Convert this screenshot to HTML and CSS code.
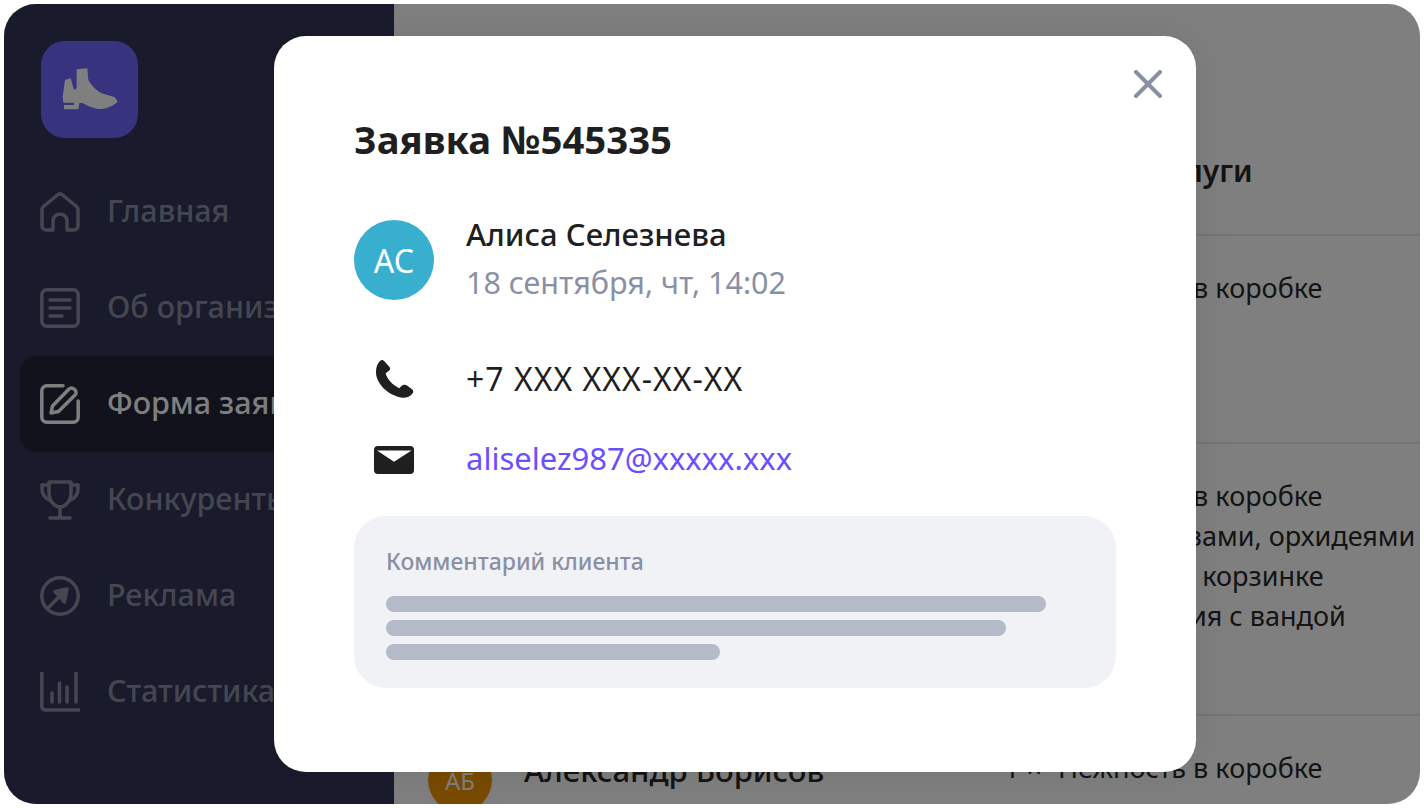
FILE: index.html
```html
<!DOCTYPE html>
<html lang="en">
<head>
    <meta charset="UTF-8">
    <title>Заявка</title>
    <link rel="stylesheet" href="styles.css">
</head>
<body>
    <div class="app">
        <aside class="sidebar">
            <div class="logo">
                <svg width="80" height="60" viewBox="0 0 240 180"><path d="M80 28 112 25 115 60C125 78 140 92 155 100L195 112 203 125C195 133 185 138 172 143 160 148 150 148 140 146L120 140 95 128 88 130 85 148H42V135H72V128H40L38 110 45 60 62 55 72 90 80 85z" fill="#fff"/></svg>
            </div>
            <nav class="nav">
                <a class="nav-item">
                    <svg class="nav-icon" viewBox="0 0 40 40"><path d="M13 38H6a4 4 0 0 1-4-4V17.500a4 4 0 0 1 1.400-3L17.400 3a4 4 0 0 1 5.200 0l14 11.500a4 4 0 0 1 1.400 3V34a4 4 0 0 1-4 4h-7V29a7 7 0 0 0-14 0z"/></svg>
                    <span>Главная</span>
                </a>
                <a class="nav-item">
                    <svg class="nav-icon" viewBox="0 0 40 40"><rect x="1.800" y="1.800" width="36.400" height="36.400" rx="5"/><path d="M10 12h20M10 20h20M10 28h12"/></svg>
                    <span>Об организации</span>
                </a>
                <a class="nav-item active">
                    <svg class="nav-icon" viewBox="0 0 40 40"><path d="M23 1.800H6.800a5 5 0 0 0-5 5v26.400a5 5 0 0 0 5 5h26.400a5 5 0 0 0 5-5V17"/><path d="M11 29l1.500-7L29 5a3.500 3.500 0 0 1 5 0l1 1a3.500 3.500 0 0 1 0 5L18.500 27.500z"/></svg>
                    <span>Форма заявки</span>
                </a>
                <a class="nav-item">
                    <svg class="nav-icon" viewBox="0 0 40 40"><path d="M9 2h22v11c0 7-5 14-11 14S9 20 9 13z"/><path d="M9 5H2v4c0 6 4 10 9 12M31 5h7v4c0 6-4 10-9 12M20 27v10M10 38h20"/></svg>
                    <span>Конкуренты</span>
                </a>
                <a class="nav-item">
                    <svg class="nav-icon" viewBox="0 0 40 40"><circle cx="20" cy="20" r="18.200"/><path d="M8 32 22 18"/><path class="solid" d="M15 15.500 27 13 24.500 26z"/></svg>
                    <span>Реклама</span>
                </a>
                <a class="nav-item">
                    <svg class="nav-icon" viewBox="0 0 40 40"><path d="M1.800 0v34.500a3.500 3.500 0 0 0 3.500 3.500H40M12 21v9M19.500 11v19M27 15v15M36 1v29"/></svg>
                    <span>Статистика</span>
                </a>
            </nav>
        </aside>
        <main class="content">
            <div class="table-head">
                <span class="col-client"></span>
                <span class="col-service">Наши услуги</span>
            </div>
            <div class="row row-short">
                <div class="col-client"></div>
                <div class="col-service"><p><span class="qty">1 ×</span>Нежность в коробке</p></div>
            </div>
            <div class="row row-long">
                <div class="col-client"></div>
                <div class="col-service">
                    <p><span class="qty">1 ×</span>Нежность в коробке</p>
                    <p><span class="qty">1 ×</span>Букет с розами, орхидеями</p>
                    <p><span class="qty">1 ×</span>Орхидеи в корзинке</p>
                    <p><span class="qty">1 ×</span>Композиция с вандой</p>
                </div>
            </div>
            <div class="row">
                <div class="col-client client">
                    <span class="client-avatar">АБ</span>
                    <span class="client-name">Александр Борисов</span>
                </div>
                <div class="col-service"><p><span class="qty">1 ×</span>Нежность в коробке</p></div>
            </div>
        </main>
        <div class="overlay">
            <section class="modal">
                <svg class="close" width="28" height="28" viewBox="0 0 28 28"><path d="M2 2l24 24M26 2 2 26"/></svg>
                <h1 class="modal-title">Заявка №545335</h1>
                <div class="person">
                    <div class="avatar">АС</div>
                    <div>
                        <div class="person-name">Алиса Селезнева</div>
                        <div class="person-date">18 сентября, чт, 14:02</div>
                    </div>
                </div>
                <div class="contact contact-phone">
                    <div class="contact-icon">
                        <svg width="40" height="40" viewBox="27 12 120 120"><path d="M46 17C50 13 55 15 58 19L73 35C77 40 76 44 72 47L62 55C66 73 85 92 103 100 106 96 110 92 114 90 118 88 122 89 125 91L141 103C146 107 146 112 142 116 135 124 125 129 112 128 70 122 32 85 33 50 33 35 38 24 46 17z" fill="#1f1f1f"/></svg>
                    </div>
                    <span class="contact-text">+7 XXX XXX-XX-XX</span>
                </div>
                <div class="contact">
                    <div class="contact-icon">
                        <svg width="40" height="28" viewBox="0 0 40 28"><rect width="40" height="28" rx="4" fill="#1f1f1f"/><path d="M3 4.500H37.500L20 15.700z" fill="#fff"/></svg>
                    </div>
                    <a class="contact-link">aliselez987@xxxxx.xxx</a>
                </div>
                <div class="comment">
                    <div class="comment-title">Комментарий клиента</div>
                    <div class="skeleton skeleton-1"></div>
                    <div class="skeleton skeleton-2"></div>
                    <div class="skeleton skeleton-3"></div>
                </div>
            </section>
        </div>
    </div>
</body>
</html>
```

FILE: styles.css
```css
* {
    box-sizing: border-box;
}
html, body {
    height: 100%;
}
body {
    margin: 0;
    padding: 4px;
    background: #fff;
    font-family: 'Noto Sans', sans-serif;
    overflow: hidden;
}
.app {
    position: relative;
    display: flex;
    width: 1416px;
    height: 800px;
    border-radius: 32px;
    overflow: hidden;
    background: #fff;
}
.sidebar {
    width: 390px;
    flex-shrink: 0;
    padding: 37px 16px 0;
    background: #323658;
}
.logo {
    display: flex;
    align-items: center;
    justify-content: center;
    width: 97px;
    height: 97px;
    margin-left: 21px;
    border-radius: 24px;
    background: #7066fe;
}
.nav {
    margin-top: 26px;
}
.nav-item {
    display: flex;
    align-items: center;
    gap: 27px;
    height: 96px;
    padding-left: 20px;
    border-radius: 16px;
    color: #888e9e;
    font-size: 30.5px;
    font-weight: 500;
}
.nav-item span {
    padding-bottom: 4px;
}
.nav-item.active {
    background: #222436;
    color: #fdfeff;
}
.nav-icon {
    width: 40px;
    height: 40px;
    flex-shrink: 0;
    fill: none;
    stroke: currentColor;
    stroke-width: 3.5;
    stroke-linecap: round;
    stroke-linejoin: round;
}
.nav-icon .solid {
    fill: currentColor;
}
.content {
    flex: 1;
    background: #fff;
    color: #282828;
    font-size: 27px;
}
.table-head {
    display: flex;
    height: 232px;
    padding-top: 146px;
    border-bottom: 2px solid #eaeaea;
    font-size: 30px;
    font-weight: 600;
}
.col-client {
    width: 610px;
    padding-left: 131px;
}
.table-head .col-service {
    padding-left: 54px;
}
.row {
    display: flex;
    padding-top: 32px;
    border-bottom: 2px solid #eaeaea;
}
.row-short {
    height: 208px;
}
.row-long {
    height: 272px;
}
.row p {
    margin: 0;
    line-height: 40px;
}
.qty {
    display: inline-block;
    width: 54px;
}
.client {
    display: flex;
    gap: 32px;
    padding-left: 34px;
}
.client-avatar {
    display: flex;
    align-items: center;
    justify-content: center;
    flex-shrink: 0;
    width: 64px;
    height: 64px;
    border-radius: 50%;
    background: #f09600;
    color: #fff;
    font-size: 24px;
}
.client-name {
    margin-top: 2px;
    font-size: 31px;
    line-height: 40px;
    font-weight: 500;
    white-space: nowrap;
}
.overlay {
    position: absolute;
    inset: 0;
    padding: 32px 0 0 270px;
    background: rgba(0, 0, 0, 0.5);
}
.modal {
    position: relative;
    width: 922px;
    height: 736px;
    padding: 75px 80px 0;
    border-radius: 32px;
    background: #fff;
    box-shadow: 0 0 40px rgba(0, 0, 0, 0.08);
    color: #1f1f1f;
}
.close {
    position: absolute;
    top: 34px;
    right: 34px;
    fill: none;
    stroke: #8a90a3;
    stroke-width: 4;
    stroke-linecap: round;
}
.modal-title {
    margin: 0;
    font-size: 38.3px;
    line-height: 56px;
    font-weight: 700;
}
.person {
    display: flex;
    gap: 32px;
    height: 80px;
    margin-top: 53px;
}
.avatar {
    display: flex;
    align-items: center;
    justify-content: center;
    width: 80px;
    height: 80px;
    border-radius: 50%;
    background: #39afcf;
    color: #fff;
    font-size: 32px;
}
.person-name {
    font-size: 31px;
    line-height: 28px;
    font-weight: 500;
}
.person-date {
    margin-top: 14px;
    font-size: 30.5px;
    line-height: 40px;
    color: #8a90a3;
}
.contact {
    display: flex;
    align-items: center;
    gap: 32px;
    height: 40px;
    margin-top: 41px;
    font-size: 30px;
}
.contact-phone {
    margin-top: 59px;
}
.contact-icon {
    display: flex;
    align-items: center;
    justify-content: center;
    width: 80px;
    height: 40px;
}
.contact-text {
    padding-bottom: 2px;
    font-size: 32px;
    letter-spacing: 1px;
}
.contact-link {
    padding-bottom: 4px;
    font-size: 31px;
    color: #6b4fff;
}
.comment {
    height: 172px;
    margin-top: 36px;
    padding: 29px 32px 0;
    border-radius: 32px;
    background: #f1f2f6;
}
.comment-title {
    margin-bottom: 19px;
    font-size: 23px;
    line-height: 32px;
    font-weight: 500;
    color: #8a90a3;
}
.skeleton {
    height: 16px;
    margin-bottom: 8px;
    border-radius: 8px;
    background: #b4bac8;
}
.skeleton-1 {
    width: 660px;
}
.skeleton-2 {
    width: 620px;
}
.skeleton-3 {
    width: 334px;
}
```
